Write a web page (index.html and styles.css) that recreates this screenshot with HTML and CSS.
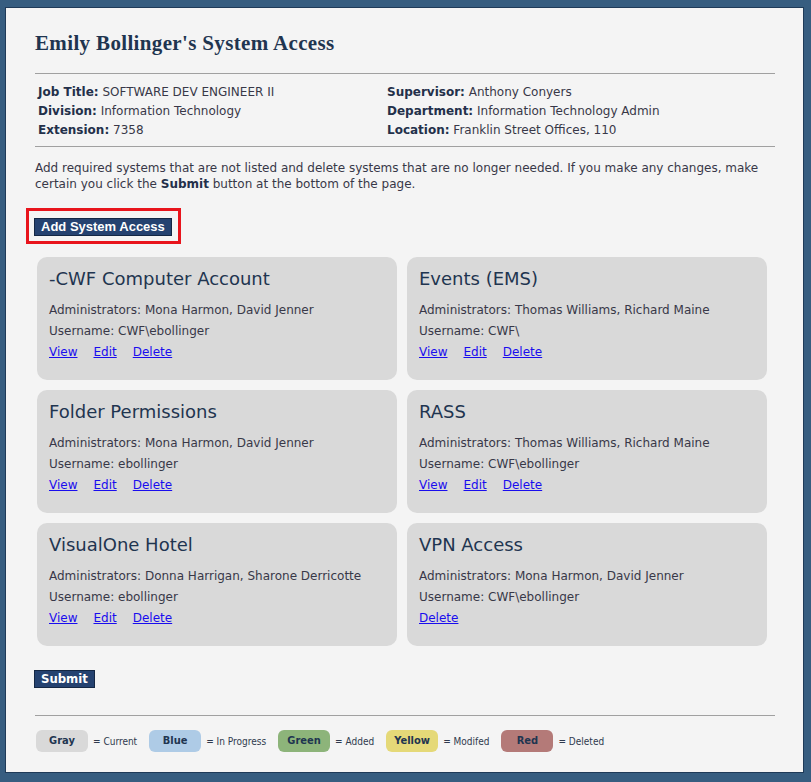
FILE: index.html
```html
<!DOCTYPE html>
<html>
<head>
<meta charset="utf-8">
<link rel="stylesheet" href="styles.css">
</head>
<body>
<div class="panel">
  <h1 class="title">Emily Bollinger's System Access</h1>
  <hr class="rule">
  <div class="info">
    <div class="info-cell"><b>Job Title:</b> SOFTWARE DEV ENGINEER II</div>
    <div class="info-cell"><b>Supervisor:</b> Anthony Conyers</div>
    <div class="info-cell"><b>Division:</b> Information Technology</div>
    <div class="info-cell"><b>Department:</b> Information Technology Admin</div>
    <div class="info-cell"><b>Extension:</b> 7358</div>
    <div class="info-cell"><b>Location:</b> Franklin Street Offices, 110</div>
  </div>
  <hr class="rule rule-2">
  <p class="intro">Add required systems that are not listed and delete systems that are no longer needed. If you make any changes, make certain you click the <b>Submit</b> button at the bottom of the page.</p>
  <div class="highlight"><button class="btn">Add System Access</button></div>
  <div class="cards">
    <div class="card">
      <div class="card-title">-CWF Computer Account</div>
      <div class="line">Administrators: Mona Harmon, David Jenner</div>
      <div class="line">Username: CWF\ebollinger</div>
      <div class="line links"><a href="#">View</a><a href="#">Edit</a><a href="#">Delete</a></div>
    </div>
    <div class="card">
      <div class="card-title">Events (EMS)</div>
      <div class="line">Administrators: Thomas Williams, Richard Maine</div>
      <div class="line">Username: CWF\</div>
      <div class="line links"><a href="#">View</a><a href="#">Edit</a><a href="#">Delete</a></div>
    </div>
    <div class="card">
      <div class="card-title">Folder Permissions</div>
      <div class="line">Administrators: Mona Harmon, David Jenner</div>
      <div class="line">Username: ebollinger</div>
      <div class="line links"><a href="#">View</a><a href="#">Edit</a><a href="#">Delete</a></div>
    </div>
    <div class="card">
      <div class="card-title">RASS</div>
      <div class="line">Administrators: Thomas Williams, Richard Maine</div>
      <div class="line">Username: CWF\ebollinger</div>
      <div class="line links"><a href="#">View</a><a href="#">Edit</a><a href="#">Delete</a></div>
    </div>
    <div class="card">
      <div class="card-title">VisualOne Hotel</div>
      <div class="line">Administrators: Donna Harrigan, Sharone Derricotte</div>
      <div class="line">Username: ebollinger</div>
      <div class="line links"><a href="#">View</a><a href="#">Edit</a><a href="#">Delete</a></div>
    </div>
    <div class="card">
      <div class="card-title">VPN Access</div>
      <div class="line">Administrators: Mona Harmon, David Jenner</div>
      <div class="line">Username: CWF\ebollinger</div>
      <div class="line links"><a href="#">Delete</a></div>
    </div>
  </div>
  <button class="btn btn-submit">Submit</button>
  <hr class="rule rule-3">
  <div class="legend">
    <span class="badge gray">Gray</span><span class="legend-text">= Current</span>
    <span class="badge blue">Blue</span><span class="legend-text">= In Progress</span>
    <span class="badge green">Green</span><span class="legend-text">= Added</span>
    <span class="badge yellow">Yellow</span><span class="legend-text">= Modifed</span>
    <span class="badge red">Red</span><span class="legend-text">= Deleted</span>
  </div>
</div>
</body>
</html>
```
FILE: styles.css
```css
html, body {
  margin: 0;
  padding: 0;
}
body {
  background: #375d80;
  padding: 7px 7px 9px 5px;
  font-family: "DejaVu Sans", Verdana, sans-serif;
  font-size: 12px;
  color: #383848;
}
.panel {
  box-sizing: border-box;
  width: 799px;
  height: 766px;
  background: #f4f4f4;
  border: 1px solid #1f3a58;
  padding: 23px 28px 0 29px;
}
.title {
  margin: 0;
  font-family: "Liberation Serif", "Times New Roman", serif;
  font-weight: bold;
  font-size: 21px;
  line-height: 24px;
  color: #1f3550;
  letter-spacing: 0.35px;
}
.rule {
  border: 0;
  border-top: 1px solid #a0a0a0;
  margin: 18px 0 0 0;
  height: 0;
}
.rule-2 {
  margin-top: 6px;
}
.rule-3 {
  margin-top: 27px;
}
.info {
  display: grid;
  grid-template-columns: 349px auto;
  margin-top: 9px;
  padding-left: 3px;
  line-height: 19px;
}
.info b {
  color: #23304a;
}
.intro {
  margin: 13px 0 0 0;
  line-height: 16px;
}
.intro b {
  color: #23304a;
}
.highlight {
  display: inline-block;
  margin: 16px 0 0 -9px;
  border: 3px solid #e8141c;
  padding: 7px 6px 5px 5px;
}
.btn {
  display: block;
  margin: 0;
  background: #254270;
  border: 1px solid #142744;
  color: #ffffff;
  font-family: "Liberation Sans", Arial, sans-serif;
  font-weight: bold;
  font-size: 13px;
  height: 18px;
  line-height: 16px;
  padding: 0 6px;
}
.cards {
  display: grid;
  grid-template-columns: 360px 360px;
  gap: 10px;
  margin-top: 13px;
  padding-left: 2px;
}
.card {
  box-sizing: border-box;
  height: 123px;
  background: #d9d9d9;
  border-radius: 10px;
  padding: 11px 12px;
}
.card-title {
  font-size: 18px;
  line-height: 22px;
  color: #1f3550;
  margin-bottom: 10px;
}
.line {
  line-height: 21px;
}
.links a {
  color: #1a0dee;
  text-decoration: underline;
  margin-right: 16px;
}
.btn-submit {
  margin: 24px 0 0 -1px;
  font-family: "DejaVu Sans Condensed", "DejaVu Sans", sans-serif;
  font-stretch: condensed;
  font-size: 13px;
  padding: 0 6px;
}
.legend {
  display: flex;
  align-items: center;
  margin-top: 14px;
  padding-left: 1px;
  font-family: "DejaVu Sans Condensed", "DejaVu Sans", sans-serif;
  font-stretch: condensed;
  font-size: 10px;
}
.badge {
  box-sizing: border-box;
  width: 52px;
  height: 22px;
  line-height: 22px;
  text-align: center;
  border-radius: 6px;
  font-weight: bold;
  font-size: 11px;
  color: #1f3550;
}
.legend-text {
  margin: 0 12px 0 5px;
  color: #2f3a4e;
}
.gray { background: #d9d9d9; }
.blue { background: #aecbe6; }
.green { background: #8db47a; }
.yellow { background: #e5d978; }
.red { background: #b47a78; }
```
